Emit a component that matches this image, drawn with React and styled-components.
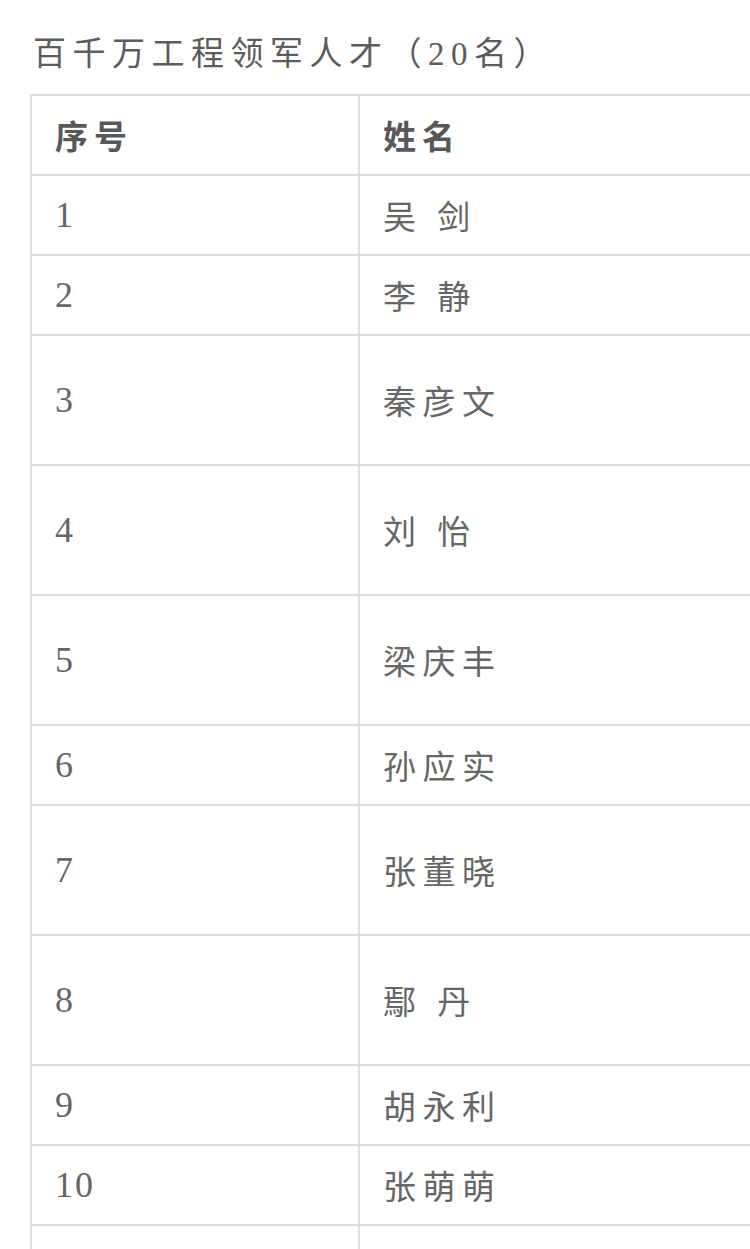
import React from "react";
import styled, { createGlobalStyle } from "styled-components";

const GlobalStyle = createGlobalStyle`
  html, body {
    margin: 0;
    padding: 0;
    overflow: hidden;
    background: #fff;
  }
  body {
    font-family: "Liberation Serif", "Noto Sans CJK SC", serif;
    color: #666;
  }
`;

const SPage = styled.div`
  padding: 34px 0 0 30px;
  width: 1000px;
`;

const STitle = styled.h2`
  margin: 0 0 20px 3px;
  font-size: 33px;
  font-weight: 400;
  line-height: 40px;
  letter-spacing: 6.5px;
  color: #5c5c5c;
`;

const STable = styled.table`
  border-collapse: collapse;
  width: 960px;
  table-layout: fixed;
`;

const SHead = styled.th`
  box-sizing: border-box;
  height: 80px;
  padding: 0 23px;
  border: 2px solid #dedede;
  text-align: left;
  font-size: 33px;
  font-weight: 700;
  letter-spacing: 6px;
  color: #585858;
  width: ${(p) => p.$w || "auto"};
`;

const SCell = styled.td`
  box-sizing: border-box;
  height: ${(p) => (p.$tall ? 130 : 80)}px;
  padding: 0 23px;
  border: 2px solid #dedede;
  font-size: ${(p) => (p.$name ? 33 : 36)}px;
  letter-spacing: ${(p) => (p.$name ? 6.5 : 2)}px;
  color: #666;
  vertical-align: middle;
`;

const rows = [
  { no: "1", name: "吴 剑" },
  { no: "2", name: "李 静" },
  { no: "3", name: "秦彦文", tall: true },
  { no: "4", name: "刘 怡", tall: true },
  { no: "5", name: "梁庆丰", tall: true },
  { no: "6", name: "孙应实" },
  { no: "7", name: "张董晓", tall: true },
  { no: "8", name: "鄢 丹", tall: true },
  { no: "9", name: "胡永利" },
  { no: "10", name: "张萌萌" },
];

export default function App() {
  return (
    <SPage>
      <GlobalStyle />
      <STitle>百千万工程领军人才（20名）</STitle>
      <STable>
        <thead>
          <tr>
            <SHead $w="328px">序号</SHead>
            <SHead>姓名</SHead>
          </tr>
        </thead>
        <tbody>
          {rows.map((r) => (
            <tr key={r.no}>
              <SCell $tall={r.tall}>{r.no}</SCell>
              <SCell $tall={r.tall} $name>
                {r.name}
              </SCell>
            </tr>
          ))}
          <tr>
            <SCell />
            <SCell $name />
          </tr>
        </tbody>
      </STable>
    </SPage>
  );
}
